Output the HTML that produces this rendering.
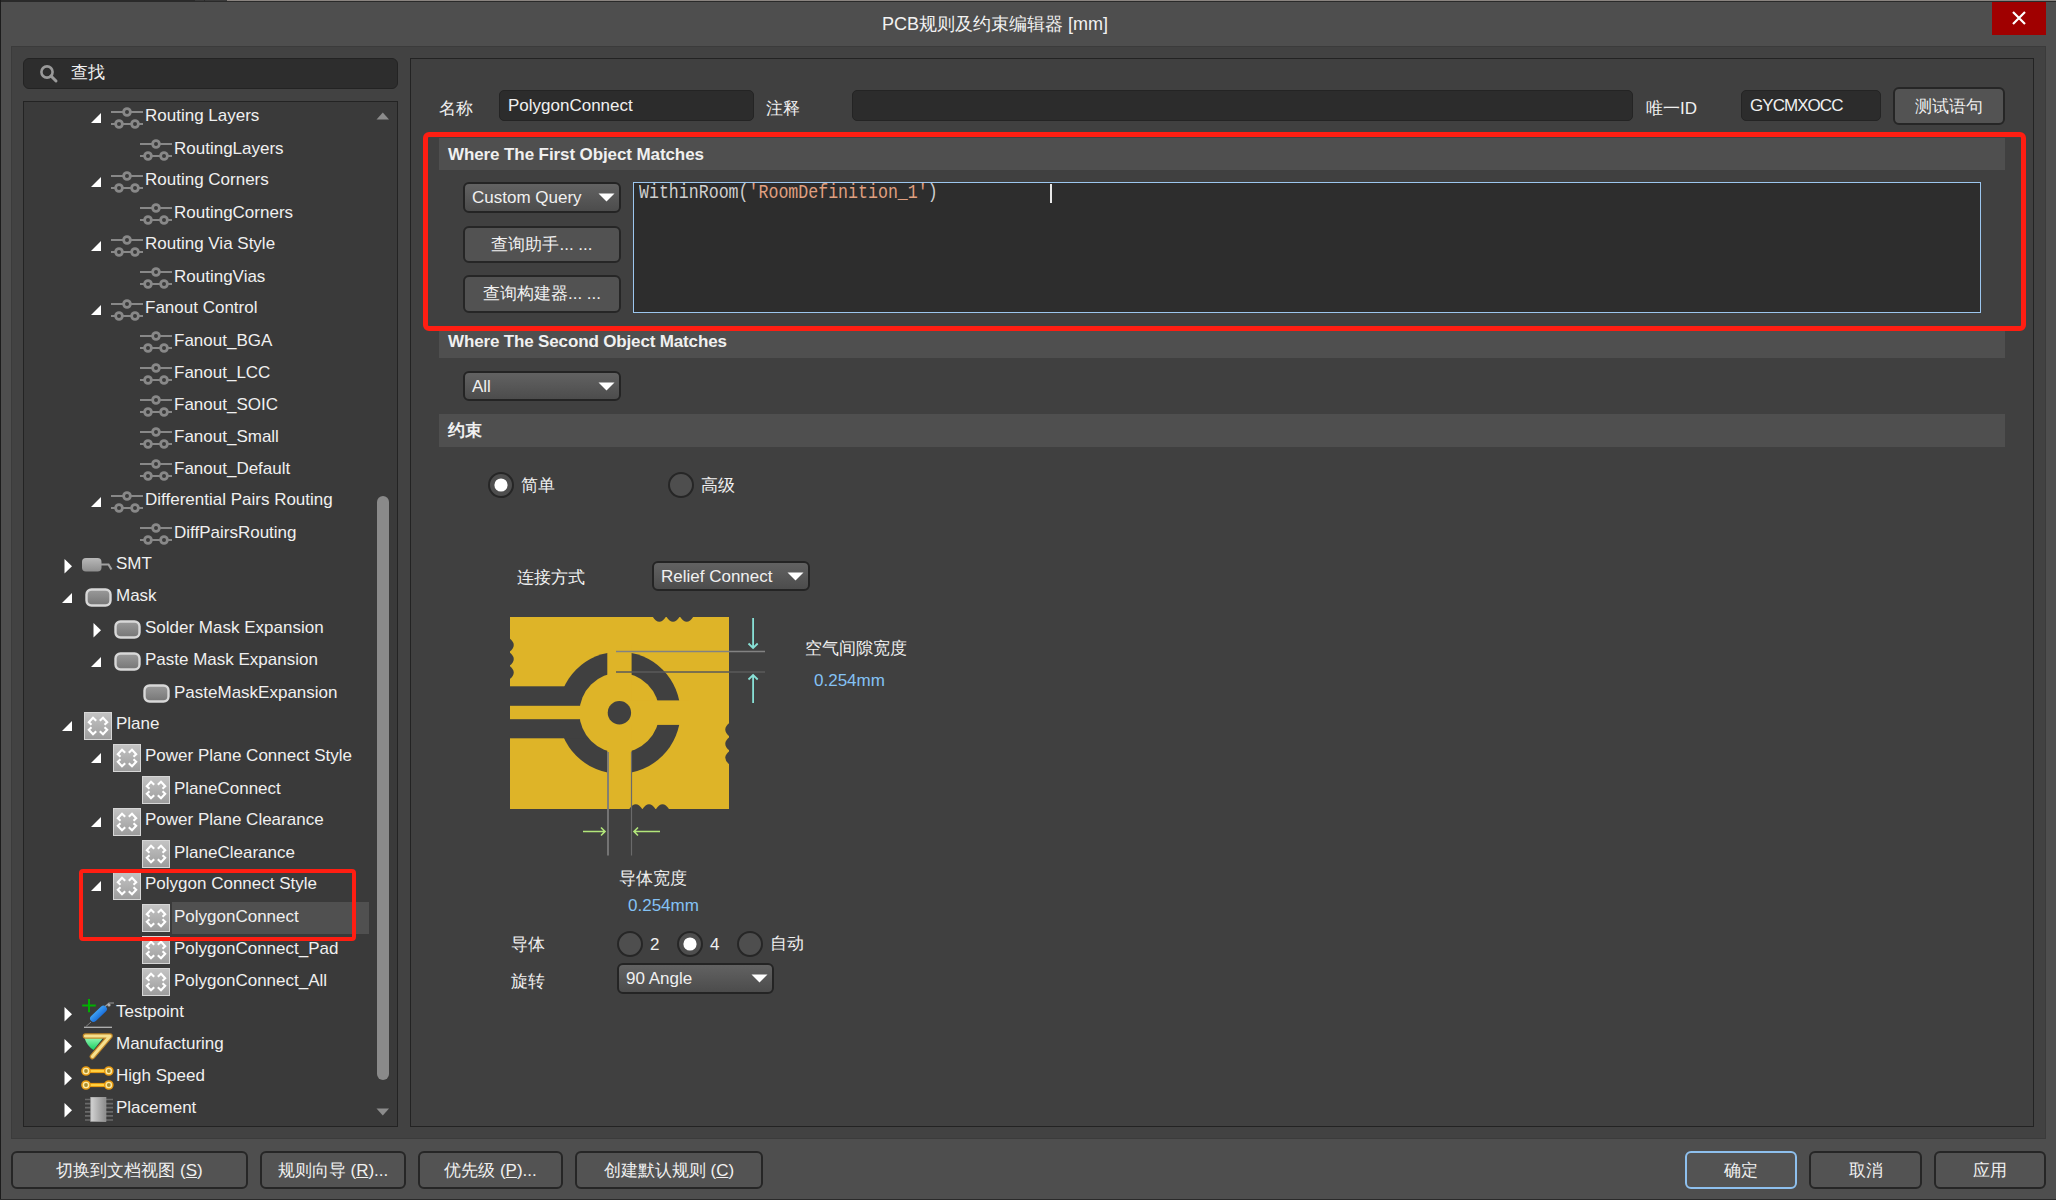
<!DOCTYPE html><html><head><meta charset="utf-8"><style>
*{margin:0;padding:0;box-sizing:border-box}
html,body{width:2056px;height:1200px;overflow:hidden}
body{position:relative;background:#4e4e4e;font-family:"Liberation Sans",sans-serif;}
.t{position:absolute;white-space:pre;line-height:1;}
.b{position:absolute;}
</style></head><body><div class="b" style="left:0px;top:0px;width:2056px;height:2px;background:#2a2a2a"></div>
<div class="b" style="left:195px;top:0px;width:9px;height:1px;background:#3a3a3a"></div>
<div class="b" style="left:205px;top:0px;width:22px;height:1px;background:#3a3a3a"></div>
<div class="b" style="left:227px;top:0px;width:1829px;height:1px;background:#8a8480"></div>
<div class="b" style="left:0px;top:0px;width:1px;height:1200px;background:#1c1c1c"></div>
<div class="t" style="left:882px;top:14.66px;font-size:18px;color:#f2f2f2;font-weight:400;font-family:'Liberation Sans', sans-serif;">PCB规则及约束编辑器 [mm]</div>
<div class="b" style="left:1992px;top:2px;width:54px;height:33px;background:#a00000"></div>
<svg class="b" style="left:2011px;top:10px;" width="16" height="16" viewBox="0 0 16 16"><path d="M2,2 L14,14 M14,2 L2,14" stroke="#fff" stroke-width="2.2" fill="none"/></svg>
<div class="b" style="left:11px;top:46px;width:2035px;height:1093px;background:#424242;border:1px solid #3b3b3b"></div>
<div class="b" style="left:23px;top:58px;width:375px;height:31px;background:#2d2d2d;border:1.5px solid #232323;border-radius:6px"></div>
<svg class="b" style="left:38px;top:63px;" width="22" height="22" viewBox="0 0 22 22"><circle cx="9" cy="9" r="5.6" stroke="#9a9a9a" stroke-width="2.6" fill="none"/><path d="M13,13 L18,18" stroke="#9a9a9a" stroke-width="3" stroke-linecap="round"/></svg>
<div class="t" style="left:71px;top:63.61px;font-size:17px;color:#f0f0f0;font-weight:400;font-family:'Liberation Sans', sans-serif;">查找</div>
<div class="b" style="left:23px;top:101px;width:375px;height:1026px;background:#3a3a3a;border:1px solid #232323"></div>
<div class="b" style="left:172px;top:902px;width:197px;height:32px;background:#505050"></div>
<svg class="b" style="left:91px;top:113px;" width="11" height="11" viewBox="0 0 11 11"><path d="M0,10 L10,0 L10,10 Z" fill="#fff"/></svg>
<svg class="b" style="left:111px;top:106px;" width="33" height="24" viewBox="0 0 33 24"><g stroke="#888" fill="none"><path d="M0,6 L32,6 M0,18 L32,18" stroke-width="2"/><g stroke-width="2.8"><circle cx="16" cy="6" r="3.4" fill="#3a3a3a"/><circle cx="8" cy="18" r="3.4" fill="#3a3a3a"/><circle cx="24" cy="18" r="3.4" fill="#3a3a3a"/></g></g></svg>
<div class="t" style="left:145px;top:106.61px;font-size:17px;color:#f0f0f0;font-weight:400;font-family:'Liberation Sans', sans-serif;">Routing Layers</div>
<svg class="b" style="left:140px;top:138px;" width="33" height="24" viewBox="0 0 33 24"><g stroke="#888" fill="none"><path d="M0,6 L32,6 M0,18 L32,18" stroke-width="2"/><g stroke-width="2.8"><circle cx="16" cy="6" r="3.4" fill="#3a3a3a"/><circle cx="8" cy="18" r="3.4" fill="#3a3a3a"/><circle cx="24" cy="18" r="3.4" fill="#3a3a3a"/></g></g></svg>
<div class="t" style="left:174px;top:139.61px;font-size:17px;color:#f0f0f0;font-weight:400;font-family:'Liberation Sans', sans-serif;">RoutingLayers</div>
<svg class="b" style="left:91px;top:177px;" width="11" height="11" viewBox="0 0 11 11"><path d="M0,10 L10,0 L10,10 Z" fill="#fff"/></svg>
<svg class="b" style="left:111px;top:170px;" width="33" height="24" viewBox="0 0 33 24"><g stroke="#888" fill="none"><path d="M0,6 L32,6 M0,18 L32,18" stroke-width="2"/><g stroke-width="2.8"><circle cx="16" cy="6" r="3.4" fill="#3a3a3a"/><circle cx="8" cy="18" r="3.4" fill="#3a3a3a"/><circle cx="24" cy="18" r="3.4" fill="#3a3a3a"/></g></g></svg>
<div class="t" style="left:145px;top:170.61px;font-size:17px;color:#f0f0f0;font-weight:400;font-family:'Liberation Sans', sans-serif;">Routing Corners</div>
<svg class="b" style="left:140px;top:202px;" width="33" height="24" viewBox="0 0 33 24"><g stroke="#888" fill="none"><path d="M0,6 L32,6 M0,18 L32,18" stroke-width="2"/><g stroke-width="2.8"><circle cx="16" cy="6" r="3.4" fill="#3a3a3a"/><circle cx="8" cy="18" r="3.4" fill="#3a3a3a"/><circle cx="24" cy="18" r="3.4" fill="#3a3a3a"/></g></g></svg>
<div class="t" style="left:174px;top:203.61px;font-size:17px;color:#f0f0f0;font-weight:400;font-family:'Liberation Sans', sans-serif;">RoutingCorners</div>
<svg class="b" style="left:91px;top:241px;" width="11" height="11" viewBox="0 0 11 11"><path d="M0,10 L10,0 L10,10 Z" fill="#fff"/></svg>
<svg class="b" style="left:111px;top:234px;" width="33" height="24" viewBox="0 0 33 24"><g stroke="#888" fill="none"><path d="M0,6 L32,6 M0,18 L32,18" stroke-width="2"/><g stroke-width="2.8"><circle cx="16" cy="6" r="3.4" fill="#3a3a3a"/><circle cx="8" cy="18" r="3.4" fill="#3a3a3a"/><circle cx="24" cy="18" r="3.4" fill="#3a3a3a"/></g></g></svg>
<div class="t" style="left:145px;top:234.61px;font-size:17px;color:#f0f0f0;font-weight:400;font-family:'Liberation Sans', sans-serif;">Routing Via Style</div>
<svg class="b" style="left:140px;top:266px;" width="33" height="24" viewBox="0 0 33 24"><g stroke="#888" fill="none"><path d="M0,6 L32,6 M0,18 L32,18" stroke-width="2"/><g stroke-width="2.8"><circle cx="16" cy="6" r="3.4" fill="#3a3a3a"/><circle cx="8" cy="18" r="3.4" fill="#3a3a3a"/><circle cx="24" cy="18" r="3.4" fill="#3a3a3a"/></g></g></svg>
<div class="t" style="left:174px;top:267.61px;font-size:17px;color:#f0f0f0;font-weight:400;font-family:'Liberation Sans', sans-serif;">RoutingVias</div>
<svg class="b" style="left:91px;top:305px;" width="11" height="11" viewBox="0 0 11 11"><path d="M0,10 L10,0 L10,10 Z" fill="#fff"/></svg>
<svg class="b" style="left:111px;top:298px;" width="33" height="24" viewBox="0 0 33 24"><g stroke="#888" fill="none"><path d="M0,6 L32,6 M0,18 L32,18" stroke-width="2"/><g stroke-width="2.8"><circle cx="16" cy="6" r="3.4" fill="#3a3a3a"/><circle cx="8" cy="18" r="3.4" fill="#3a3a3a"/><circle cx="24" cy="18" r="3.4" fill="#3a3a3a"/></g></g></svg>
<div class="t" style="left:145px;top:298.61px;font-size:17px;color:#f0f0f0;font-weight:400;font-family:'Liberation Sans', sans-serif;">Fanout Control</div>
<svg class="b" style="left:140px;top:330px;" width="33" height="24" viewBox="0 0 33 24"><g stroke="#888" fill="none"><path d="M0,6 L32,6 M0,18 L32,18" stroke-width="2"/><g stroke-width="2.8"><circle cx="16" cy="6" r="3.4" fill="#3a3a3a"/><circle cx="8" cy="18" r="3.4" fill="#3a3a3a"/><circle cx="24" cy="18" r="3.4" fill="#3a3a3a"/></g></g></svg>
<div class="t" style="left:174px;top:331.61px;font-size:17px;color:#f0f0f0;font-weight:400;font-family:'Liberation Sans', sans-serif;">Fanout_BGA</div>
<svg class="b" style="left:140px;top:362px;" width="33" height="24" viewBox="0 0 33 24"><g stroke="#888" fill="none"><path d="M0,6 L32,6 M0,18 L32,18" stroke-width="2"/><g stroke-width="2.8"><circle cx="16" cy="6" r="3.4" fill="#3a3a3a"/><circle cx="8" cy="18" r="3.4" fill="#3a3a3a"/><circle cx="24" cy="18" r="3.4" fill="#3a3a3a"/></g></g></svg>
<div class="t" style="left:174px;top:363.61px;font-size:17px;color:#f0f0f0;font-weight:400;font-family:'Liberation Sans', sans-serif;">Fanout_LCC</div>
<svg class="b" style="left:140px;top:394px;" width="33" height="24" viewBox="0 0 33 24"><g stroke="#888" fill="none"><path d="M0,6 L32,6 M0,18 L32,18" stroke-width="2"/><g stroke-width="2.8"><circle cx="16" cy="6" r="3.4" fill="#3a3a3a"/><circle cx="8" cy="18" r="3.4" fill="#3a3a3a"/><circle cx="24" cy="18" r="3.4" fill="#3a3a3a"/></g></g></svg>
<div class="t" style="left:174px;top:395.61px;font-size:17px;color:#f0f0f0;font-weight:400;font-family:'Liberation Sans', sans-serif;">Fanout_SOIC</div>
<svg class="b" style="left:140px;top:426px;" width="33" height="24" viewBox="0 0 33 24"><g stroke="#888" fill="none"><path d="M0,6 L32,6 M0,18 L32,18" stroke-width="2"/><g stroke-width="2.8"><circle cx="16" cy="6" r="3.4" fill="#3a3a3a"/><circle cx="8" cy="18" r="3.4" fill="#3a3a3a"/><circle cx="24" cy="18" r="3.4" fill="#3a3a3a"/></g></g></svg>
<div class="t" style="left:174px;top:427.61px;font-size:17px;color:#f0f0f0;font-weight:400;font-family:'Liberation Sans', sans-serif;">Fanout_Small</div>
<svg class="b" style="left:140px;top:458px;" width="33" height="24" viewBox="0 0 33 24"><g stroke="#888" fill="none"><path d="M0,6 L32,6 M0,18 L32,18" stroke-width="2"/><g stroke-width="2.8"><circle cx="16" cy="6" r="3.4" fill="#3a3a3a"/><circle cx="8" cy="18" r="3.4" fill="#3a3a3a"/><circle cx="24" cy="18" r="3.4" fill="#3a3a3a"/></g></g></svg>
<div class="t" style="left:174px;top:459.61px;font-size:17px;color:#f0f0f0;font-weight:400;font-family:'Liberation Sans', sans-serif;">Fanout_Default</div>
<svg class="b" style="left:91px;top:497px;" width="11" height="11" viewBox="0 0 11 11"><path d="M0,10 L10,0 L10,10 Z" fill="#fff"/></svg>
<svg class="b" style="left:111px;top:490px;" width="33" height="24" viewBox="0 0 33 24"><g stroke="#888" fill="none"><path d="M0,6 L32,6 M0,18 L32,18" stroke-width="2"/><g stroke-width="2.8"><circle cx="16" cy="6" r="3.4" fill="#3a3a3a"/><circle cx="8" cy="18" r="3.4" fill="#3a3a3a"/><circle cx="24" cy="18" r="3.4" fill="#3a3a3a"/></g></g></svg>
<div class="t" style="left:145px;top:490.61px;font-size:17px;color:#f0f0f0;font-weight:400;font-family:'Liberation Sans', sans-serif;">Differential Pairs Routing</div>
<svg class="b" style="left:140px;top:522px;" width="33" height="24" viewBox="0 0 33 24"><g stroke="#888" fill="none"><path d="M0,6 L32,6 M0,18 L32,18" stroke-width="2"/><g stroke-width="2.8"><circle cx="16" cy="6" r="3.4" fill="#3a3a3a"/><circle cx="8" cy="18" r="3.4" fill="#3a3a3a"/><circle cx="24" cy="18" r="3.4" fill="#3a3a3a"/></g></g></svg>
<div class="t" style="left:174px;top:523.61px;font-size:17px;color:#f0f0f0;font-weight:400;font-family:'Liberation Sans', sans-serif;">DiffPairsRouting</div>
<svg class="b" style="left:63.5px;top:559px;" width="9" height="15" viewBox="0 0 9 15"><path d="M0.5,0 L8,7.2 L0.5,14.5 Z" fill="#fff"/></svg>
<svg class="b" style="left:82px;top:558px;" width="31" height="15" viewBox="0 0 31 15"><defs><linearGradient id="gs" x1="0" y1="0" x2="0" y2="1"><stop offset="0" stop-color="#b8b8b8"/><stop offset="1" stop-color="#8e8e8e"/></linearGradient></defs><rect x="0" y="0" width="19.5" height="13.5" rx="4" fill="url(#gs)"/><path d="M19,6.5 L26.5,6.5 L29.5,11.5" stroke="#a0a0a0" stroke-width="2.2" fill="none"/></svg>
<div class="t" style="left:116px;top:554.61px;font-size:17px;color:#f0f0f0;font-weight:400;font-family:'Liberation Sans', sans-serif;">SMT</div>
<svg class="b" style="left:62px;top:593px;" width="11" height="11" viewBox="0 0 11 11"><path d="M0,10 L10,0 L10,10 Z" fill="#fff"/></svg>
<svg class="b" style="left:84.5px;top:588px;" width="27" height="19" viewBox="0 0 27 19"><defs><linearGradient id="gm" x1="0" y1="0" x2="0" y2="1"><stop offset="0" stop-color="#9a9a9a"/><stop offset="1" stop-color="#767676"/></linearGradient></defs><rect x="1.5" y="1.5" width="24" height="16" rx="5" fill="url(#gm)" stroke="#d8d8d8" stroke-width="2.4"/></svg>
<div class="t" style="left:116px;top:586.61px;font-size:17px;color:#f0f0f0;font-weight:400;font-family:'Liberation Sans', sans-serif;">Mask</div>
<svg class="b" style="left:92.5px;top:623px;" width="9" height="15" viewBox="0 0 9 15"><path d="M0.5,0 L8,7.2 L0.5,14.5 Z" fill="#fff"/></svg>
<svg class="b" style="left:113.5px;top:620px;" width="27" height="19" viewBox="0 0 27 19"><defs><linearGradient id="gm" x1="0" y1="0" x2="0" y2="1"><stop offset="0" stop-color="#9a9a9a"/><stop offset="1" stop-color="#767676"/></linearGradient></defs><rect x="1.5" y="1.5" width="24" height="16" rx="5" fill="url(#gm)" stroke="#d8d8d8" stroke-width="2.4"/></svg>
<div class="t" style="left:145px;top:618.61px;font-size:17px;color:#f0f0f0;font-weight:400;font-family:'Liberation Sans', sans-serif;">Solder Mask Expansion</div>
<svg class="b" style="left:91px;top:657px;" width="11" height="11" viewBox="0 0 11 11"><path d="M0,10 L10,0 L10,10 Z" fill="#fff"/></svg>
<svg class="b" style="left:113.5px;top:652px;" width="27" height="19" viewBox="0 0 27 19"><defs><linearGradient id="gm" x1="0" y1="0" x2="0" y2="1"><stop offset="0" stop-color="#9a9a9a"/><stop offset="1" stop-color="#767676"/></linearGradient></defs><rect x="1.5" y="1.5" width="24" height="16" rx="5" fill="url(#gm)" stroke="#d8d8d8" stroke-width="2.4"/></svg>
<div class="t" style="left:145px;top:650.61px;font-size:17px;color:#f0f0f0;font-weight:400;font-family:'Liberation Sans', sans-serif;">Paste Mask Expansion</div>
<svg class="b" style="left:142.5px;top:684px;" width="27" height="19" viewBox="0 0 27 19"><defs><linearGradient id="gm" x1="0" y1="0" x2="0" y2="1"><stop offset="0" stop-color="#9a9a9a"/><stop offset="1" stop-color="#767676"/></linearGradient></defs><rect x="1.5" y="1.5" width="24" height="16" rx="5" fill="url(#gm)" stroke="#d8d8d8" stroke-width="2.4"/></svg>
<div class="t" style="left:174px;top:683.61px;font-size:17px;color:#f0f0f0;font-weight:400;font-family:'Liberation Sans', sans-serif;">PasteMaskExpansion</div>
<svg class="b" style="left:62px;top:721px;" width="11" height="11" viewBox="0 0 11 11"><path d="M0,10 L10,0 L10,10 Z" fill="#fff"/></svg>
<svg class="b" style="left:84px;top:712px;" width="28" height="28" viewBox="0 0 28 28"><defs><linearGradient id="gp" x1="0" y1="0" x2="0" y2="1"><stop offset="0" stop-color="#c4c4c4"/><stop offset="1" stop-color="#9c9c9c"/></linearGradient></defs><rect x="0.5" y="0.5" width="27" height="27" fill="url(#gp)" stroke="#d6d6d6" stroke-width="1"/><g stroke="#fff" stroke-width="2.1" fill="none" stroke-linejoin="miter"><path d="M7.5,12.8 L4.8,10.2 L9,5.8 L12.2,8.8"/><path d="M20.5,12.8 L23.2,10.2 L19,5.8 L15.8,8.8"/><path d="M7.5,15.2 L4.8,17.8 L9,22.2 L12.2,19.2"/><path d="M20.5,15.2 L23.2,17.8 L19,22.2 L15.8,19.2"/></g></svg>
<div class="t" style="left:116px;top:714.61px;font-size:17px;color:#f0f0f0;font-weight:400;font-family:'Liberation Sans', sans-serif;">Plane</div>
<svg class="b" style="left:91px;top:753px;" width="11" height="11" viewBox="0 0 11 11"><path d="M0,10 L10,0 L10,10 Z" fill="#fff"/></svg>
<svg class="b" style="left:113px;top:744px;" width="28" height="28" viewBox="0 0 28 28"><defs><linearGradient id="gp" x1="0" y1="0" x2="0" y2="1"><stop offset="0" stop-color="#c4c4c4"/><stop offset="1" stop-color="#9c9c9c"/></linearGradient></defs><rect x="0.5" y="0.5" width="27" height="27" fill="url(#gp)" stroke="#d6d6d6" stroke-width="1"/><g stroke="#fff" stroke-width="2.1" fill="none" stroke-linejoin="miter"><path d="M7.5,12.8 L4.8,10.2 L9,5.8 L12.2,8.8"/><path d="M20.5,12.8 L23.2,10.2 L19,5.8 L15.8,8.8"/><path d="M7.5,15.2 L4.8,17.8 L9,22.2 L12.2,19.2"/><path d="M20.5,15.2 L23.2,17.8 L19,22.2 L15.8,19.2"/></g></svg>
<div class="t" style="left:145px;top:746.61px;font-size:17px;color:#f0f0f0;font-weight:400;font-family:'Liberation Sans', sans-serif;">Power Plane Connect Style</div>
<svg class="b" style="left:142px;top:776px;" width="28" height="28" viewBox="0 0 28 28"><defs><linearGradient id="gp" x1="0" y1="0" x2="0" y2="1"><stop offset="0" stop-color="#c4c4c4"/><stop offset="1" stop-color="#9c9c9c"/></linearGradient></defs><rect x="0.5" y="0.5" width="27" height="27" fill="url(#gp)" stroke="#d6d6d6" stroke-width="1"/><g stroke="#fff" stroke-width="2.1" fill="none" stroke-linejoin="miter"><path d="M7.5,12.8 L4.8,10.2 L9,5.8 L12.2,8.8"/><path d="M20.5,12.8 L23.2,10.2 L19,5.8 L15.8,8.8"/><path d="M7.5,15.2 L4.8,17.8 L9,22.2 L12.2,19.2"/><path d="M20.5,15.2 L23.2,17.8 L19,22.2 L15.8,19.2"/></g></svg>
<div class="t" style="left:174px;top:779.61px;font-size:17px;color:#f0f0f0;font-weight:400;font-family:'Liberation Sans', sans-serif;">PlaneConnect</div>
<svg class="b" style="left:91px;top:817px;" width="11" height="11" viewBox="0 0 11 11"><path d="M0,10 L10,0 L10,10 Z" fill="#fff"/></svg>
<svg class="b" style="left:113px;top:808px;" width="28" height="28" viewBox="0 0 28 28"><defs><linearGradient id="gp" x1="0" y1="0" x2="0" y2="1"><stop offset="0" stop-color="#c4c4c4"/><stop offset="1" stop-color="#9c9c9c"/></linearGradient></defs><rect x="0.5" y="0.5" width="27" height="27" fill="url(#gp)" stroke="#d6d6d6" stroke-width="1"/><g stroke="#fff" stroke-width="2.1" fill="none" stroke-linejoin="miter"><path d="M7.5,12.8 L4.8,10.2 L9,5.8 L12.2,8.8"/><path d="M20.5,12.8 L23.2,10.2 L19,5.8 L15.8,8.8"/><path d="M7.5,15.2 L4.8,17.8 L9,22.2 L12.2,19.2"/><path d="M20.5,15.2 L23.2,17.8 L19,22.2 L15.8,19.2"/></g></svg>
<div class="t" style="left:145px;top:810.61px;font-size:17px;color:#f0f0f0;font-weight:400;font-family:'Liberation Sans', sans-serif;">Power Plane Clearance</div>
<svg class="b" style="left:142px;top:840px;" width="28" height="28" viewBox="0 0 28 28"><defs><linearGradient id="gp" x1="0" y1="0" x2="0" y2="1"><stop offset="0" stop-color="#c4c4c4"/><stop offset="1" stop-color="#9c9c9c"/></linearGradient></defs><rect x="0.5" y="0.5" width="27" height="27" fill="url(#gp)" stroke="#d6d6d6" stroke-width="1"/><g stroke="#fff" stroke-width="2.1" fill="none" stroke-linejoin="miter"><path d="M7.5,12.8 L4.8,10.2 L9,5.8 L12.2,8.8"/><path d="M20.5,12.8 L23.2,10.2 L19,5.8 L15.8,8.8"/><path d="M7.5,15.2 L4.8,17.8 L9,22.2 L12.2,19.2"/><path d="M20.5,15.2 L23.2,17.8 L19,22.2 L15.8,19.2"/></g></svg>
<div class="t" style="left:174px;top:843.61px;font-size:17px;color:#f0f0f0;font-weight:400;font-family:'Liberation Sans', sans-serif;">PlaneClearance</div>
<svg class="b" style="left:91px;top:881px;" width="11" height="11" viewBox="0 0 11 11"><path d="M0,10 L10,0 L10,10 Z" fill="#fff"/></svg>
<svg class="b" style="left:113px;top:872px;" width="28" height="28" viewBox="0 0 28 28"><defs><linearGradient id="gp" x1="0" y1="0" x2="0" y2="1"><stop offset="0" stop-color="#c4c4c4"/><stop offset="1" stop-color="#9c9c9c"/></linearGradient></defs><rect x="0.5" y="0.5" width="27" height="27" fill="url(#gp)" stroke="#d6d6d6" stroke-width="1"/><g stroke="#fff" stroke-width="2.1" fill="none" stroke-linejoin="miter"><path d="M7.5,12.8 L4.8,10.2 L9,5.8 L12.2,8.8"/><path d="M20.5,12.8 L23.2,10.2 L19,5.8 L15.8,8.8"/><path d="M7.5,15.2 L4.8,17.8 L9,22.2 L12.2,19.2"/><path d="M20.5,15.2 L23.2,17.8 L19,22.2 L15.8,19.2"/></g></svg>
<div class="t" style="left:145px;top:874.61px;font-size:17px;color:#f0f0f0;font-weight:400;font-family:'Liberation Sans', sans-serif;">Polygon Connect Style</div>
<svg class="b" style="left:142px;top:904px;" width="28" height="28" viewBox="0 0 28 28"><defs><linearGradient id="gp" x1="0" y1="0" x2="0" y2="1"><stop offset="0" stop-color="#c4c4c4"/><stop offset="1" stop-color="#9c9c9c"/></linearGradient></defs><rect x="0.5" y="0.5" width="27" height="27" fill="url(#gp)" stroke="#d6d6d6" stroke-width="1"/><g stroke="#fff" stroke-width="2.1" fill="none" stroke-linejoin="miter"><path d="M7.5,12.8 L4.8,10.2 L9,5.8 L12.2,8.8"/><path d="M20.5,12.8 L23.2,10.2 L19,5.8 L15.8,8.8"/><path d="M7.5,15.2 L4.8,17.8 L9,22.2 L12.2,19.2"/><path d="M20.5,15.2 L23.2,17.8 L19,22.2 L15.8,19.2"/></g></svg>
<div class="t" style="left:174px;top:907.61px;font-size:17px;color:#f0f0f0;font-weight:400;font-family:'Liberation Sans', sans-serif;">PolygonConnect</div>
<svg class="b" style="left:142px;top:936px;" width="28" height="28" viewBox="0 0 28 28"><defs><linearGradient id="gp" x1="0" y1="0" x2="0" y2="1"><stop offset="0" stop-color="#c4c4c4"/><stop offset="1" stop-color="#9c9c9c"/></linearGradient></defs><rect x="0.5" y="0.5" width="27" height="27" fill="url(#gp)" stroke="#d6d6d6" stroke-width="1"/><g stroke="#fff" stroke-width="2.1" fill="none" stroke-linejoin="miter"><path d="M7.5,12.8 L4.8,10.2 L9,5.8 L12.2,8.8"/><path d="M20.5,12.8 L23.2,10.2 L19,5.8 L15.8,8.8"/><path d="M7.5,15.2 L4.8,17.8 L9,22.2 L12.2,19.2"/><path d="M20.5,15.2 L23.2,17.8 L19,22.2 L15.8,19.2"/></g></svg>
<div class="t" style="left:174px;top:939.61px;font-size:17px;color:#f0f0f0;font-weight:400;font-family:'Liberation Sans', sans-serif;">PolygonConnect_Pad</div>
<svg class="b" style="left:142px;top:968px;" width="28" height="28" viewBox="0 0 28 28"><defs><linearGradient id="gp" x1="0" y1="0" x2="0" y2="1"><stop offset="0" stop-color="#c4c4c4"/><stop offset="1" stop-color="#9c9c9c"/></linearGradient></defs><rect x="0.5" y="0.5" width="27" height="27" fill="url(#gp)" stroke="#d6d6d6" stroke-width="1"/><g stroke="#fff" stroke-width="2.1" fill="none" stroke-linejoin="miter"><path d="M7.5,12.8 L4.8,10.2 L9,5.8 L12.2,8.8"/><path d="M20.5,12.8 L23.2,10.2 L19,5.8 L15.8,8.8"/><path d="M7.5,15.2 L4.8,17.8 L9,22.2 L12.2,19.2"/><path d="M20.5,15.2 L23.2,17.8 L19,22.2 L15.8,19.2"/></g></svg>
<div class="t" style="left:174px;top:971.61px;font-size:17px;color:#f0f0f0;font-weight:400;font-family:'Liberation Sans', sans-serif;">PolygonConnect_All</div>
<svg class="b" style="left:63.5px;top:1007px;" width="9" height="15" viewBox="0 0 9 15"><path d="M0.5,0 L8,7.2 L0.5,14.5 Z" fill="#fff"/></svg>
<svg class="b" style="left:82px;top:995px;" width="33" height="34" viewBox="0 0 33 34"><defs><linearGradient id="gt" x1="0" y1="0" x2="1" y2="1"><stop offset="0" stop-color="#50b8ff"/><stop offset="1" stop-color="#0a58d0"/></linearGradient></defs><path d="M2,32.3 L30,32.3" stroke="#b4b4b4" stroke-width="1.3"/><path d="M4,31.5 L9,27" stroke="#808080" stroke-width="1"/><path d="M22,12.5 L27,8 L32,8" stroke="#9a9a9a" stroke-width="1.1" fill="none"/><circle cx="27" cy="10" r="1.6" fill="#b0b0b0"/><path d="M11.5,23.5 L21.5,14" stroke="url(#gt)" stroke-width="6.8" stroke-linecap="round"/><path d="M7,4 L7,17.2 M0.2,10.6 L13.8,10.6" stroke="#00b000" stroke-width="2"/></svg>
<div class="t" style="left:116px;top:1002.61px;font-size:17px;color:#f0f0f0;font-weight:400;font-family:'Liberation Sans', sans-serif;">Testpoint</div>
<svg class="b" style="left:63.5px;top:1039px;" width="9" height="15" viewBox="0 0 9 15"><path d="M0.5,0 L8,7.2 L0.5,14.5 Z" fill="#fff"/></svg>
<svg class="b" style="left:82px;top:1029px;" width="32" height="32" viewBox="0 0 32 32"><defs><linearGradient id="gg" x1="0" y1="0" x2="0" y2="1"><stop offset="0" stop-color="#90f4b0"/><stop offset="1" stop-color="#18d060"/></linearGradient></defs><path d="M2.5,9 L21,9 L11.5,21 Q5,17 2.5,9 Z" fill="url(#gg)"/><path d="M3.5,7 L28,7 L10.5,27.5" stroke="#c48a28" stroke-width="5.6" fill="none" stroke-linecap="round" stroke-linejoin="round"/><path d="M3.5,7 L28,7 L10.5,27.5" stroke="#f6e08e" stroke-width="3.2" fill="none" stroke-linecap="round" stroke-linejoin="round"/></svg>
<div class="t" style="left:116px;top:1034.61px;font-size:17px;color:#f0f0f0;font-weight:400;font-family:'Liberation Sans', sans-serif;">Manufacturing</div>
<svg class="b" style="left:63.5px;top:1071px;" width="9" height="15" viewBox="0 0 9 15"><path d="M0.5,0 L8,7.2 L0.5,14.5 Z" fill="#fff"/></svg>
<svg class="b" style="left:81.4px;top:1065.0px;" width="33" height="27" viewBox="0 0 33 27"><path d="M5,6 L27.8,6" stroke="#e89a10" stroke-width="4.2"/><path d="M5,6 L27.8,6" stroke="#ffd040" stroke-width="2"/><circle cx="5" cy="6" r="4.1" fill="#ffeaa0" stroke="#e89a10" stroke-width="1.5"/><circle cx="27.8" cy="6" r="4.1" fill="#ffeaa0" stroke="#e89a10" stroke-width="1.5"/><circle cx="5" cy="6" r="1.9" fill="#a88c30"/><circle cx="27.8" cy="6" r="1.9" fill="#a88c30"/><path d="M5,20 L27.8,20" stroke="#e89a10" stroke-width="4.2"/><path d="M5,20 L27.8,20" stroke="#ffd040" stroke-width="2"/><circle cx="5" cy="20" r="4.1" fill="#ffeaa0" stroke="#e89a10" stroke-width="1.5"/><circle cx="27.8" cy="20" r="4.1" fill="#ffeaa0" stroke="#e89a10" stroke-width="1.5"/><circle cx="5" cy="20" r="1.9" fill="#a88c30"/><circle cx="27.8" cy="20" r="1.9" fill="#a88c30"/></svg>
<div class="t" style="left:116px;top:1066.61px;font-size:17px;color:#f0f0f0;font-weight:400;font-family:'Liberation Sans', sans-serif;">High Speed</div>
<svg class="b" style="left:63.5px;top:1103px;" width="9" height="15" viewBox="0 0 9 15"><path d="M0.5,0 L8,7.2 L0.5,14.5 Z" fill="#fff"/></svg>
<svg class="b" style="left:84px;top:1097.0px;" width="30" height="25" viewBox="0 0 30 25"><defs><linearGradient id="gc" x1="0" y1="0" x2="1" y2="0"><stop offset="0" stop-color="#d4d4d4"/><stop offset="1" stop-color="#8c8c8c"/></linearGradient></defs><path d="M1,2.5 L8,2.5 M21,2.5 L29,2.5" stroke="#6a6a6a" stroke-width="1.7"/><path d="M1,6.6 L8,6.6 M21,6.6 L29,6.6" stroke="#6a6a6a" stroke-width="1.7"/><path d="M1,10.7 L8,10.7 M21,10.7 L29,10.7" stroke="#6a6a6a" stroke-width="1.7"/><path d="M1,14.8 L8,14.8 M21,14.8 L29,14.8" stroke="#6a6a6a" stroke-width="1.7"/><path d="M1,18.9 L8,18.9 M21,18.9 L29,18.9" stroke="#6a6a6a" stroke-width="1.7"/><path d="M1,23.0 L8,23.0 M21,23.0 L29,23.0" stroke="#6a6a6a" stroke-width="1.7"/><rect x="6.7" y="0" width="15.2" height="24.5" fill="url(#gc)" stroke="#9a9a9a" stroke-width="0.8"/></svg>
<div class="t" style="left:116px;top:1098.61px;font-size:17px;color:#f0f0f0;font-weight:400;font-family:'Liberation Sans', sans-serif;">Placement</div>
<svg class="b" style="left:376px;top:112px;" width="14" height="8" viewBox="0 0 14 8"><path d="M0.5,7.5 L6.8,0.5 L13,7.5 Z" fill="#8c8c8c"/></svg>
<div class="b" style="left:377px;top:496px;width:12px;height:584px;background:#8a8a8a;border-radius:6px"></div>
<svg class="b" style="left:376px;top:1108px;" width="14" height="8" viewBox="0 0 14 8"><path d="M0.5,0.5 L6.8,7.5 L13,0.5 Z" fill="#8c8c8c"/></svg>
<div class="b" style="left:79px;top:869px;width:277px;height:72px;border:4px solid #ff1e12;border-radius:4px"></div>
<div class="b" style="left:410px;top:58px;width:1624px;height:1069px;background:#404040;border:1px solid #232323"></div>
<div class="t" style="left:439px;top:99.61px;font-size:17px;color:#f0f0f0;font-weight:400;font-family:'Liberation Sans', sans-serif;">名称</div>
<div class="b" style="left:499px;top:90px;width:255px;height:31px;background:#2c2c2c;border:1px solid #242424;border-radius:5px"></div>
<div class="t" style="left:508px;top:96.61px;font-size:17px;color:#f0f0f0;font-weight:400;font-family:'Liberation Sans', sans-serif;">PolygonConnect</div>
<div class="t" style="left:766px;top:99.61px;font-size:17px;color:#f0f0f0;font-weight:400;font-family:'Liberation Sans', sans-serif;">注释</div>
<div class="b" style="left:852px;top:90px;width:781px;height:31px;background:#2c2c2c;border:1px solid #242424;border-radius:5px"></div>
<div class="t" style="left:1646px;top:99.61px;font-size:17px;color:#f0f0f0;font-weight:400;font-family:'Liberation Sans', sans-serif;">唯一ID</div>
<div class="b" style="left:1741px;top:90px;width:140px;height:31px;background:#2c2c2c;border:1px solid #242424;border-radius:5px"></div>
<div class="t" style="left:1750px;top:96.61px;font-size:17px;color:#f0f0f0;font-weight:400;font-family:'Liberation Sans', sans-serif;letter-spacing:-0.95px">GYCMXOCC</div>
<div class="b" style="left:1893px;top:87px;width:112px;height:38px;background:#535353;border:2px solid #262626;border-radius:6px"></div>
<div class="t" style="left:1649px;width:600px;text-align:center;top:97.61px;font-size:17px;color:#f0f0f0;font-weight:400;">测试语句</div>
<div class="b" style="left:439px;top:138px;width:1566px;height:32px;background:#4f4f4f"></div>
<div class="t" style="left:448px;top:145.61px;font-size:17px;color:#f0f0f0;font-weight:700;font-family:'Liberation Sans', sans-serif;letter-spacing:-0.1px">Where The First Object Matches</div>
<div class="b" style="left:463px;top:182px;width:158px;height:31px;background:linear-gradient(#626262,#4c4c4c);border:2px solid #242424;border-radius:6px"></div>
<div class="t" style="left:472px;top:188.61px;font-size:17px;color:#f0f0f0;font-weight:400;font-family:'Liberation Sans', sans-serif;">Custom Query</div>
<svg class="b" style="left:598px;top:193px;" width="17" height="9" viewBox="0 0 17 9"><path d="M0.5,0.5 L16.5,0.5 L8.5,8.5 Z" fill="#fff"/></svg>
<div class="b" style="left:463px;top:226px;width:158px;height:37px;background:#525252;border:2px solid #262626;border-radius:6px"></div>
<div class="t" style="left:242.0px;width:600px;text-align:center;top:235.61px;font-size:17px;color:#f0f0f0;font-weight:400;">查询助手... ...</div>
<div class="b" style="left:463px;top:275px;width:158px;height:38px;background:#525252;border:2px solid #262626;border-radius:6px"></div>
<div class="t" style="left:242.0px;width:600px;text-align:center;top:284.61px;font-size:17px;color:#f0f0f0;font-weight:400;">查询构建器... ...</div>
<div class="b" style="left:633px;top:182px;width:1348px;height:131px;background:#2d2d2d;border:1px solid #9cc6ee"></div>
<div class="t" style="left:639px;top:182px;font-family:'Liberation Mono',monospace;font-size:21px;line-height:21px;transform:scaleX(0.79);transform-origin:0 0;color:#cfcfcf">WithinRoom(<span style="color:#e0a080">'RoomDefinition_1'</span>)</div>
<div class="b" style="left:1050px;top:184px;width:2px;height:19px;background:#e8e8e8"></div>
<div class="b" style="left:439px;top:326px;width:1566px;height:32px;background:#4f4f4f"></div>
<div class="t" style="left:448px;top:333.11px;font-size:17px;color:#f0f0f0;font-weight:700;font-family:'Liberation Sans', sans-serif;letter-spacing:-0.15px">Where The Second Object Matches</div>
<div class="b" style="left:463px;top:371px;width:158px;height:30px;background:linear-gradient(#626262,#4c4c4c);border:2px solid #242424;border-radius:6px"></div>
<div class="t" style="left:472px;top:377.61px;font-size:17px;color:#f0f0f0;font-weight:400;font-family:'Liberation Sans', sans-serif;">All</div>
<svg class="b" style="left:598px;top:382px;" width="17" height="9" viewBox="0 0 17 9"><path d="M0.5,0.5 L16.5,0.5 L8.5,8.5 Z" fill="#fff"/></svg>
<div class="b" style="left:439px;top:414px;width:1566px;height:33px;background:#4f4f4f"></div>
<div class="t" style="left:448px;top:421.61px;font-size:17px;color:#f0f0f0;font-weight:700;font-family:'Liberation Sans', sans-serif;">约束</div>
<svg class="b" style="left:488px;top:472px;" width="26" height="26" viewBox="0 0 26 26"><circle cx="13" cy="13" r="12" fill="#4e4e4e" stroke="#262626" stroke-width="2"/><circle cx="13" cy="13" r="6.6" fill="#fff"/></svg>
<div class="t" style="left:521px;top:476.61px;font-size:17px;color:#f0f0f0;font-weight:400;font-family:'Liberation Sans', sans-serif;">简单</div>
<svg class="b" style="left:668px;top:472px;" width="26" height="26" viewBox="0 0 26 26"><circle cx="13" cy="13" r="12" fill="#4e4e4e" stroke="#262626" stroke-width="2"/></svg>
<div class="t" style="left:701px;top:476.61px;font-size:17px;color:#f0f0f0;font-weight:400;font-family:'Liberation Sans', sans-serif;">高级</div>
<div class="t" style="left:517px;top:568.61px;font-size:17px;color:#f0f0f0;font-weight:400;font-family:'Liberation Sans', sans-serif;">连接方式</div>
<div class="b" style="left:652px;top:561px;width:158px;height:30px;background:linear-gradient(#626262,#4c4c4c);border:2px solid #242424;border-radius:6px"></div>
<div class="t" style="left:661px;top:567.61px;font-size:17px;color:#f0f0f0;font-weight:400;font-family:'Liberation Sans', sans-serif;">Relief Connect</div>
<svg class="b" style="left:787px;top:572px;" width="17" height="9" viewBox="0 0 17 9"><path d="M0.5,0.5 L16.5,0.5 L8.5,8.5 Z" fill="#fff"/></svg>
<svg class="b" style="left:500px;top:600px;" width="280" height="270" viewBox="0 0 280 270"><rect x="10" y="17" width="219" height="192" fill="#deb428"/><path d="M152.5,16.5 Q159.3,27 166.10000000000002,16.5 Z" fill="#404040"/><path d="M166.2,16.5 Q173,27 179.8,16.5 Z" fill="#404040"/><path d="M179.89999999999998,16.5 Q186.7,27 193.5,16.5 Z" fill="#404040"/><path d="M128.95,209.5 Q135.75,199 142.55,209.5 Z" fill="#404040"/><path d="M142.2,209.5 Q149,199 155.8,209.5 Z" fill="#404040"/><path d="M155.7,209.5 Q162.5,199 169.3,209.5 Z" fill="#404040"/><path d="M9.5,38.2 Q18,45 9.5,51.8 Z" fill="#404040"/><path d="M9.5,52.2 Q18,59 9.5,65.8 Z" fill="#404040"/><path d="M9.5,65.7 Q18,72.5 9.5,79.3 Z" fill="#404040"/><path d="M229.5,122.8 Q221,129.6 229.5,136.4 Z" fill="#404040"/><path d="M229.5,136.89999999999998 Q221,143.7 229.5,150.5 Z" fill="#404040"/><path d="M229.5,151.0 Q221,157.8 229.5,164.60000000000002 Z" fill="#404040"/><circle cx="119.4" cy="112.7" r="61" fill="#404040"/><rect x="10" y="86.3" width="109.4" height="52" fill="#404040"/><circle cx="119.4" cy="112.7" r="40" fill="#deb428"/><rect x="107.3" y="45" width="24.3" height="136" fill="#deb428"/><rect x="119.4" y="100.4" width="70" height="24.5" fill="#deb428"/><rect x="10" y="105.8" width="109.4" height="13.4" fill="#deb428"/><circle cx="119.4" cy="112.7" r="11.7" fill="#404040"/><path d="M116,51.5 L265,51.5" stroke="#828282" stroke-width="1.3"/><path d="M116,72 L265,72" stroke="#5a5a5a" stroke-width="1.3"/><path d="M108,152 L108,255.5" stroke="#7a7a7a" stroke-width="1.8"/><path d="M131.5,152 L131.5,255.5" stroke="#6a6a6a" stroke-width="1.2"/><path d="M253.1,18 L253.1,48 M248.5,43.5 L253.1,48 L257.7,43.5" stroke="#88e0d6" stroke-width="1.8" fill="none"/><path d="M253.1,103 L253.1,75 M248.5,79.5 L253.1,75 L257.7,79.5" stroke="#88e0d6" stroke-width="1.8" fill="none"/><path d="M83,231.5 L105,231.5 M101,227.5 L105,231.5 L101,235.5" stroke="#b2e67a" stroke-width="1.6" fill="none"/><path d="M160,231.5 L134,231.5 M138,227.5 L134,231.5 L138,235.5" stroke="#b2e67a" stroke-width="1.6" fill="none"/></svg>
<div class="t" style="left:805px;top:639.61px;font-size:17px;color:#f0f0f0;font-weight:400;font-family:'Liberation Sans', sans-serif;">空气间隙宽度</div>
<div class="t" style="left:814px;top:671.61px;font-size:17px;color:#84c2f4;font-weight:400;font-family:'Liberation Sans', sans-serif;">0.254mm</div>
<div class="t" style="left:619px;top:869.61px;font-size:17px;color:#f0f0f0;font-weight:400;font-family:'Liberation Sans', sans-serif;">导体宽度</div>
<div class="t" style="left:628px;top:896.61px;font-size:17px;color:#84c2f4;font-weight:400;font-family:'Liberation Sans', sans-serif;">0.254mm</div>
<div class="t" style="left:511px;top:936.11px;font-size:17px;color:#f0f0f0;font-weight:400;font-family:'Liberation Sans', sans-serif;">导体</div>
<svg class="b" style="left:617px;top:931px;" width="26" height="26" viewBox="0 0 26 26"><circle cx="13" cy="13" r="12" fill="#4e4e4e" stroke="#262626" stroke-width="2"/></svg>
<div class="t" style="left:650px;top:935.61px;font-size:17px;color:#f0f0f0;font-weight:400;font-family:'Liberation Sans', sans-serif;">2</div>
<svg class="b" style="left:677px;top:931px;" width="26" height="26" viewBox="0 0 26 26"><circle cx="13" cy="13" r="12" fill="#4e4e4e" stroke="#262626" stroke-width="2"/><circle cx="13" cy="13" r="6.6" fill="#fff"/></svg>
<div class="t" style="left:710px;top:935.61px;font-size:17px;color:#f0f0f0;font-weight:400;font-family:'Liberation Sans', sans-serif;">4</div>
<svg class="b" style="left:737px;top:931px;" width="26" height="26" viewBox="0 0 26 26"><circle cx="13" cy="13" r="12" fill="#4e4e4e" stroke="#262626" stroke-width="2"/></svg>
<div class="t" style="left:770px;top:935.11px;font-size:17px;color:#f0f0f0;font-weight:400;font-family:'Liberation Sans', sans-serif;">自动</div>
<div class="t" style="left:511px;top:972.61px;font-size:17px;color:#f0f0f0;font-weight:400;font-family:'Liberation Sans', sans-serif;">旋转</div>
<div class="b" style="left:617px;top:963px;width:157px;height:31px;background:linear-gradient(#626262,#4c4c4c);border:2px solid #242424;border-radius:6px"></div>
<div class="t" style="left:626px;top:969.61px;font-size:17px;color:#f0f0f0;font-weight:400;font-family:'Liberation Sans', sans-serif;">90 Angle</div>
<svg class="b" style="left:751px;top:974px;" width="17" height="9" viewBox="0 0 17 9"><path d="M0.5,0.5 L16.5,0.5 L8.5,8.5 Z" fill="#fff"/></svg>
<div class="b" style="left:11px;top:1151px;width:237px;height:38px;background:#535353;border:2px solid #262626;border-radius:6px"></div>
<div class="t" style="left:-170.5px;width:600px;text-align:center;top:1161.61px;font-size:17px;color:#f0f0f0;font-weight:400;">切换到文档视图 (<u>S</u>)</div>
<div class="b" style="left:260px;top:1151px;width:146px;height:38px;background:#535353;border:2px solid #262626;border-radius:6px"></div>
<div class="t" style="left:33.0px;width:600px;text-align:center;top:1161.61px;font-size:17px;color:#f0f0f0;font-weight:400;">规则向导 (<u>R</u>)...</div>
<div class="b" style="left:418px;top:1151px;width:145px;height:38px;background:#535353;border:2px solid #262626;border-radius:6px"></div>
<div class="t" style="left:190.5px;width:600px;text-align:center;top:1161.61px;font-size:17px;color:#f0f0f0;font-weight:400;">优先级 (<u>P</u>)...</div>
<div class="b" style="left:575px;top:1151px;width:188px;height:38px;background:#535353;border:2px solid #262626;border-radius:6px"></div>
<div class="t" style="left:369.0px;width:600px;text-align:center;top:1161.61px;font-size:17px;color:#f0f0f0;font-weight:400;">创建默认规则 (<u>C</u>)</div>
<div class="b" style="left:1685px;top:1151px;width:112px;height:38px;background:#535353;border:2px solid #8ec0ee;border-radius:6px"></div>
<div class="t" style="left:1441.0px;width:600px;text-align:center;top:1161.61px;font-size:17px;color:#f0f0f0;font-weight:400;">确定</div>
<div class="b" style="left:1809px;top:1151px;width:113px;height:38px;background:#535353;border:2px solid #262626;border-radius:6px"></div>
<div class="t" style="left:1565.5px;width:600px;text-align:center;top:1161.61px;font-size:17px;color:#f0f0f0;font-weight:400;">取消</div>
<div class="b" style="left:1934px;top:1151px;width:112px;height:38px;background:#535353;border:2px solid #262626;border-radius:6px"></div>
<div class="t" style="left:1690.0px;width:600px;text-align:center;top:1161.61px;font-size:17px;color:#f0f0f0;font-weight:400;">应用</div>
<div class="b" style="left:0px;top:1199px;width:2056px;height:1px;background:#2a2a2a"></div>
<div class="b" style="left:423px;top:132px;width:1603px;height:199px;border:5px solid #ff1e12;border-radius:6px"></div></body></html>
